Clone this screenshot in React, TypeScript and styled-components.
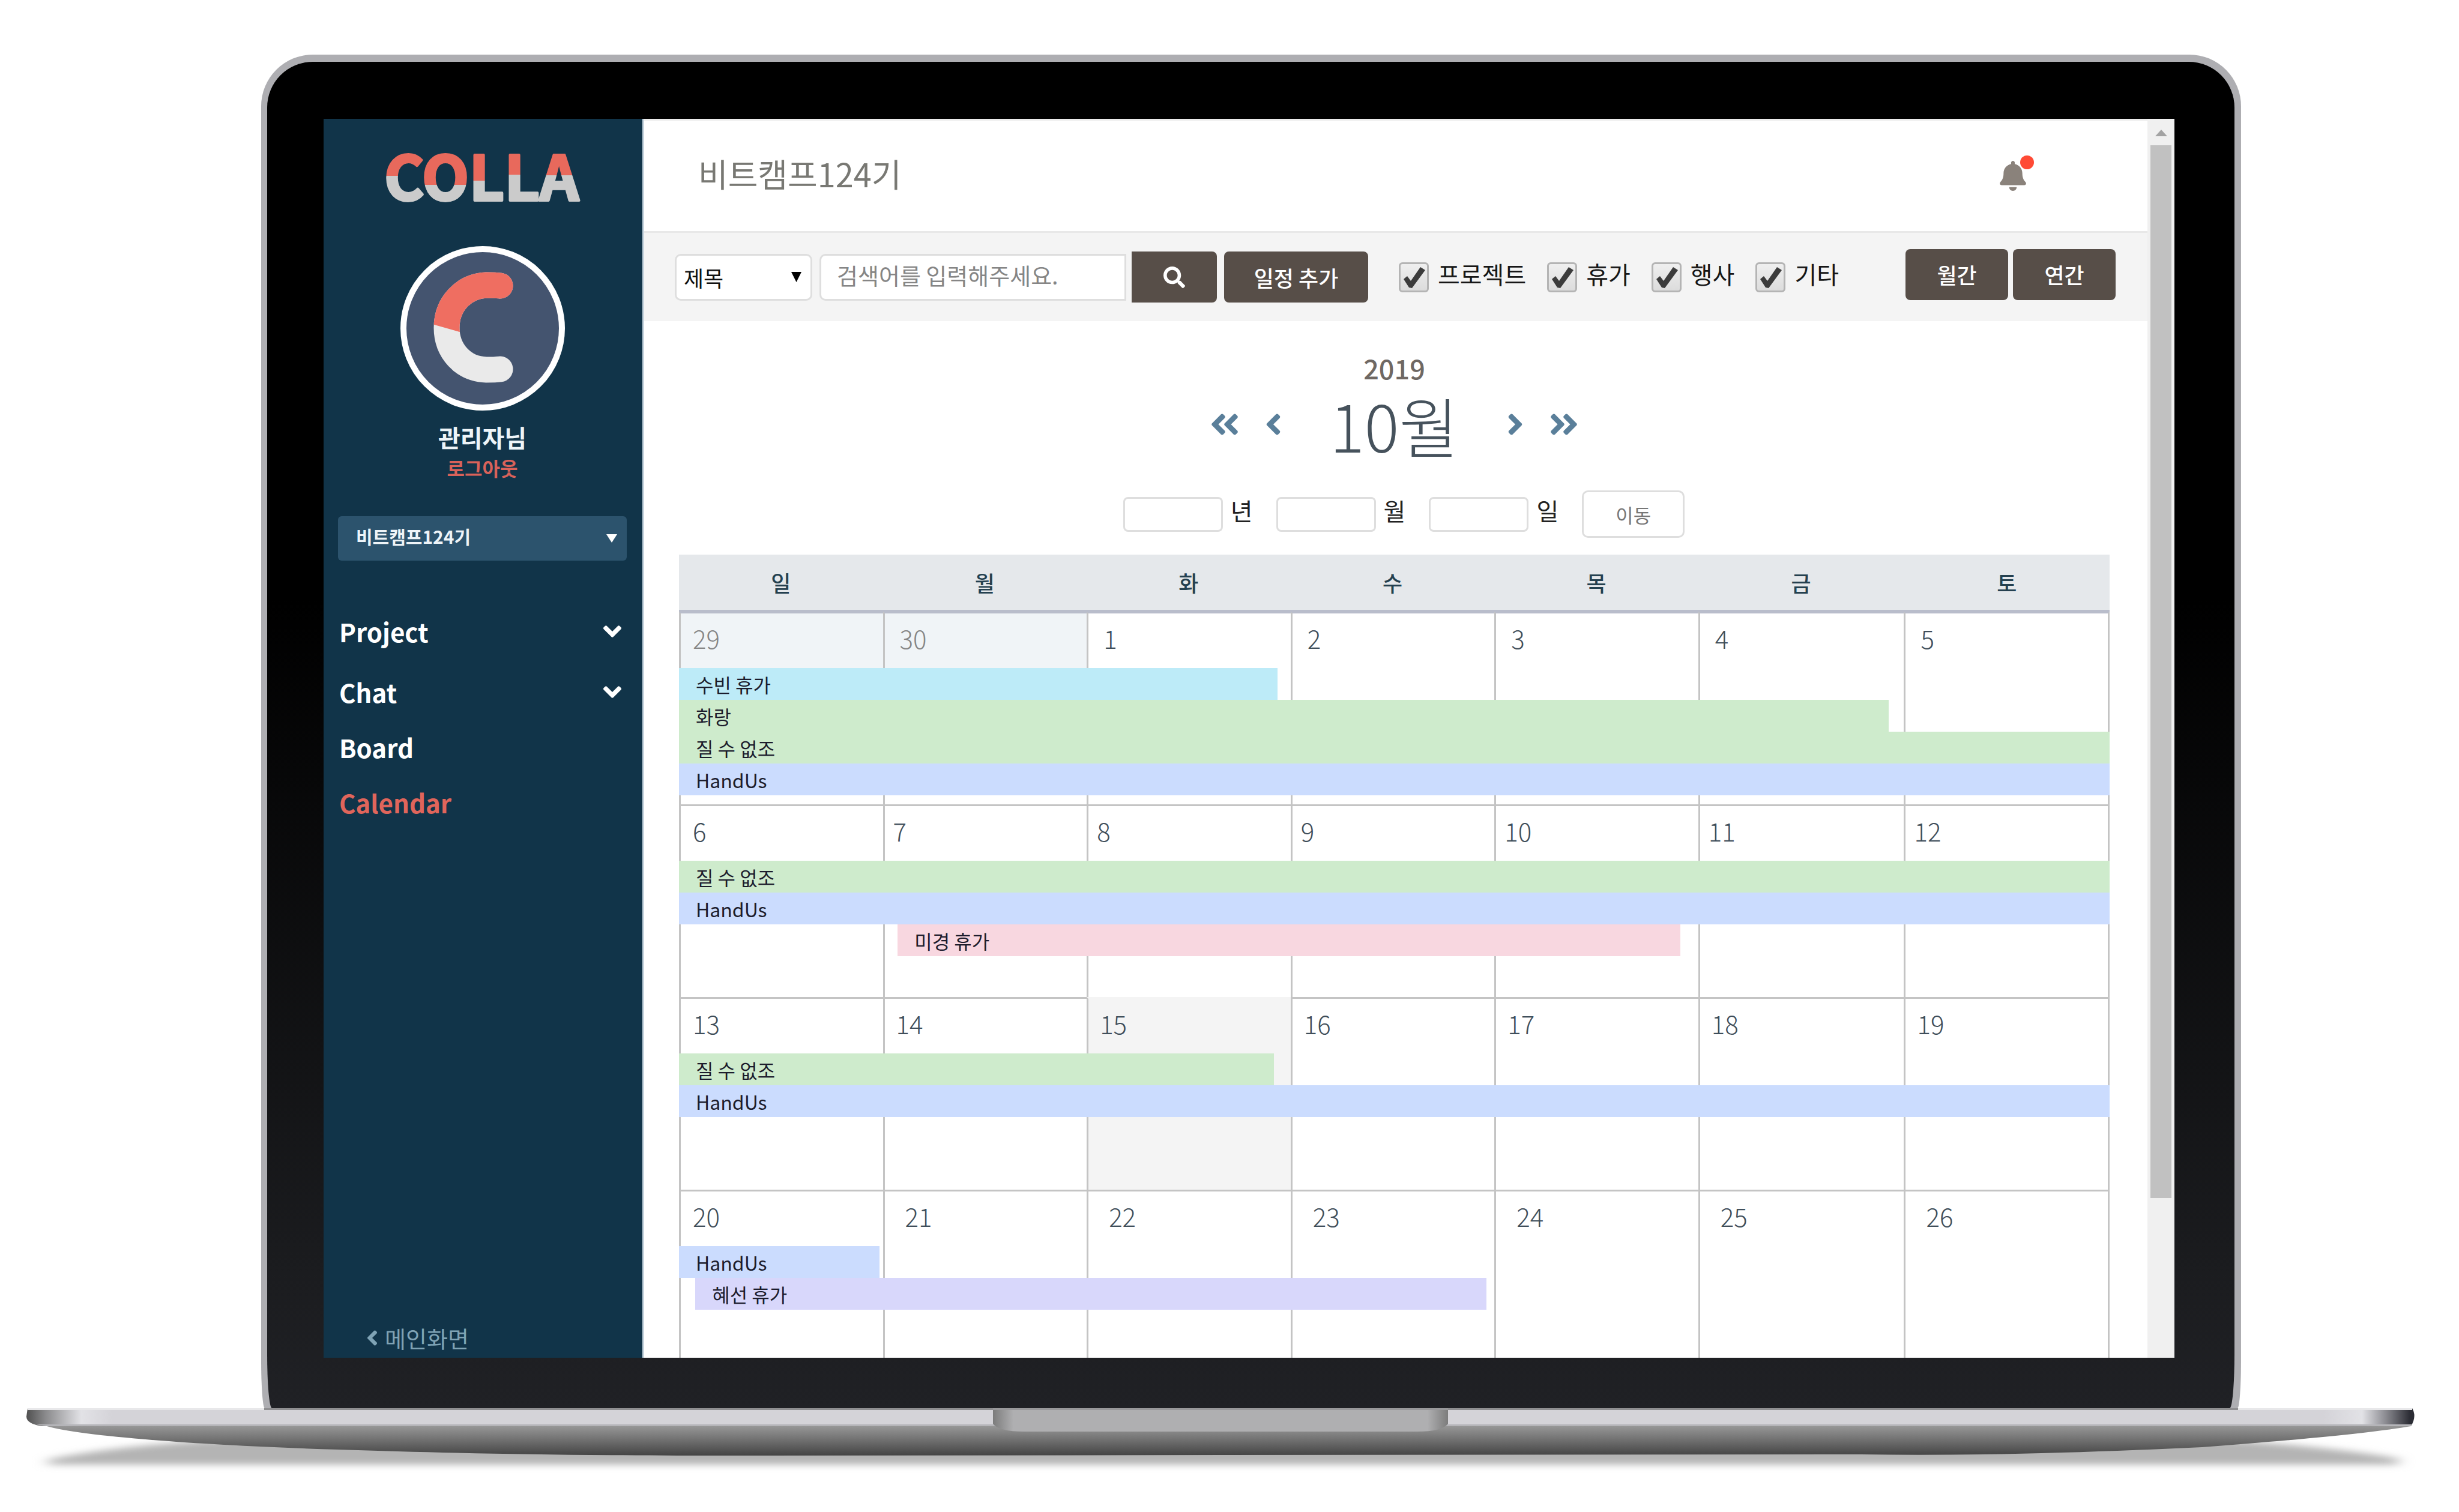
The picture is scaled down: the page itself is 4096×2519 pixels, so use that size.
import React from "react";
import styled, { createGlobalStyle } from "styled-components";
import {
  FaAngleDoubleLeft,
  FaAngleDoubleRight,
  FaAngleDown,
  FaAngleLeft,
  FaAngleRight,
  FaBell,
  FaSearch,
} from "react-icons/fa";

const Global = createGlobalStyle`
  *, *::before, *::after { box-sizing: border-box; }
  body { margin: 0; background: #fff; }
  body, button, input, select {
    font-family: "Noto Sans CJK KR", "Noto Sans", sans-serif;
  }
  button, input, select { margin: 0; padding: 0; border: 0; }
  button { cursor: pointer; }
`;

/* ---------- laptop ---------- */

const Stage = styled.div`
  display: flex;
  flex-direction: column;
  height: 100vh;
  padding-top: 91px;
  overflow: hidden;
`;

const Lid = styled.div`
  flex: 1;
  min-height: 0;
  display: flex;
  margin: 0 363px 0 435px;
  padding: 12px 11px 0 10px;
  border-radius: 86px 86px 0 0;
  border-bottom-left-radius: 6px 80px;
  border-bottom-right-radius: 6px 80px;
  background: #aeaeb2;
`;

const Bezel = styled.div`
  flex: 1;
  min-width: 0;
  display: flex;
  padding: 95px 100px 84px 94px;
  border-radius: 76px 76px 0 0;
  border-bottom-left-radius: 8px 90px;
  border-bottom-right-radius: 8px 90px;
  background: linear-gradient(#000 0%, #000 40%, #1b1c1f 90%, #202125 100%);
`;

const Screen = styled.div`
  flex: 1;
  min-width: 0;
  display: flex;
  overflow: hidden;
  background: #fff;
`;

const BaseDrawing = styled.svg`
  display: block;
  flex: none;
  width: 100%;
  height: 173px;
`;

/* ---------- sidebar ---------- */

const Sidebar = styled.aside`
  flex: none;
  display: flex;
  flex-direction: column;
  align-items: center;
  width: 534px;
  padding: 16px 26px 5px 24px;
  border-right: 3px solid #c8d6e0;
  background: #113449;
  color: #fff;
`;

const Logo = styled.svg`
  flex: none;
  width: 360px;
  height: 156px;
`;

const Avatar = styled.svg`
  flex: none;
  width: 274px;
  height: 274px;
  margin-top: 40px;
`;

const UserName = styled.strong`
  margin-top: 20px;
  font-size: 40px;
  font-weight: 700;
  line-height: 48px;
  color: #eef4f8;
`;

const Logout = styled.a`
  margin-top: 7px;
  font-size: 32px;
  font-weight: 700;
  line-height: 40px;
  color: #d9625a;
  text-decoration: none;
`;

const SelectWrap = styled.div<{ $arrowInset: number; $width: string }>`
  flex: none;
  display: grid;
  align-items: center;
  width: ${(p) => p.$width};
  & > * { grid-area: 1 / 1; }
  & > svg {
    justify-self: end;
    margin-right: ${(p) => p.$arrowInset}px;
    pointer-events: none;
  }
`;

const TeamSelect = styled.select`
  appearance: none;
  width: 100%;
  height: 74px;
  padding: 0 60px 8px 30px;
  border-radius: 6px;
  background: #2c536d;
  color: #eef4f8;
  font-size: 30px;
  font-weight: 700;
`;

const TeamPicker = styled.div`
  align-self: stretch;
  margin-top: 61px;
`;

const Nav = styled.nav`
  align-self: stretch;
  display: flex;
  flex-direction: column;
  gap: 36px;
  margin-top: 90px;
  padding: 0 0 0 2px;
`;

const NavLink = styled.a<{ $active?: boolean }>`
  display: flex;
  align-items: center;
  justify-content: space-between;
  font-size: 42px;
  font-weight: 700;
  line-height: 56px;
  color: ${(p) => (p.$active ? "#e0655b" : "#fff")};
  text-decoration: none;
  &:first-child { margin-bottom: 9px; }
  & > svg { width: 48px; height: 48px; }
`;

const BackLink = styled.a`
  align-self: flex-start;
  display: flex;
  align-items: center;
  gap: 1px;
  margin-top: auto;
  margin-left: 37px;
  font-size: 38px;
  line-height: 56px;
  color: #7fa3b5;
  text-decoration: none;
  & > svg { width: 40px; height: 40px; }
`;

/* ---------- main column ---------- */

const Main = styled.main`
  flex: 1;
  min-width: 0;
  overflow: hidden;
  border-top: 3px solid #ececec;
`;

const Header = styled.header`
  display: flex;
  align-items: center;
  justify-content: space-between;
  height: 187px;
  padding: 0 199px 0 90px;
  border-bottom: 3px solid #e8e8e8;
`;

const Title = styled.h1`
  margin: 0;
  padding-bottom: 8px;
  font-size: 54px;
  font-weight: 400;
  line-height: 72px;
  color: #787873;
`;

const BellButton = styled.button`
  position: relative;
  display: flex;
  background: none;
  color: #8a827b;
  & > svg { width: 50px; height: 50px; }
`;

const BellDot = styled.span`
  position: absolute;
  top: -9px;
  right: -10px;
  width: 23px;
  height: 23px;
  border-radius: 50%;
  background: #ff4a35;
`;

const Toolbar = styled.form`
  display: flex;
  align-items: center;
  gap: 12px;
  height: 147px;
  padding: 0 53px 0 51px;
  background: #f4f4f4;
`;

const fieldBorder = "3px solid #dedede";

const FieldSelect = styled.select`
  appearance: none;
  width: 100%;
  height: 78px;
  padding: 0 48px 0 12px;
  border: ${fieldBorder};
  border-radius: 10px;
  background: #fff;
  color: #111;
  font-size: 36px;
`;

const SearchGroup = styled.div`
  flex: 0 1 662px;
  min-width: 0;
  display: flex;
  align-items: center;
  gap: 9px;
`;

const SearchInput = styled.input`
  flex: 1;
  min-width: 0;
  height: 78px;
  padding: 0 26px 8px;
  border: ${fieldBorder};
  border-radius: 10px 0 0 10px;
  background: #fff;
  font-size: 38px;
  &::placeholder { color: #858585; opacity: 1; }
`;

const DarkButton = styled.button<{ $width: number; $attached?: boolean }>`
  flex: none;
  display: flex;
  align-items: center;
  justify-content: center;
  width: ${(p) => p.$width}px;
  height: 85px;
  border-radius: ${(p) => (p.$attached ? "0 8px 8px 0" : "8px")};
  background: #574e48;
  color: #fff;
  font-size: 36px;
  font-weight: 500;
`;

const Filters = styled.div`
  display: flex;
  gap: 35px;
  margin-left: 39px;
`;

const FilterLabel = styled.label`
  display: flex;
  align-items: center;
  gap: 15px;
  font-size: 40px;
  line-height: 56px;
  color: #161616;
`;

const FilterText = styled.span`
  padding-bottom: 11px;
`;

const TickBox = styled.span`
  display: grid;
  & > * { grid-area: 1 / 1; }
  & > svg { pointer-events: none; visibility: hidden; }
  & > input:checked + svg { visibility: visible; }
`;

const Tick = styled.input`
  appearance: none;
  width: 50px;
  height: 50px;
  border: 3px solid #b4b4b4;
  border-radius: 6px;
  background: linear-gradient(#efefef, #dcdcdc);
`;

const ViewGroup = styled.div`
  display: flex;
  gap: 8px;
  margin-left: auto;
  padding-bottom: 9px;
`;

/* ---------- calendar ---------- */

const Calendar = styled.section`
  display: flex;
  flex-direction: column;
  padding: 50px 63px 0 58px;
`;

const Year = styled.div`
  text-align: center;
  font-size: 45px;
  font-weight: 500;
  line-height: 56px;
  color: #6f6863;
`;

const MonthRow = styled.div`
  display: flex;
  align-items: center;
  justify-content: center;
  gap: 25px;
  margin-top: 16px;
`;

const MonthName = styled.h2`
  margin: 0 41px;
  font-size: 108px;
  font-weight: 300;
  line-height: 100px;
  color: #46525c;
`;

const StepButton = styled.button`
  display: flex;
  background: none;
  color: #5a7f9a;
  & > svg { width: 56px; height: 56px; }
`;

const JumpRow = styled.form`
  display: flex;
  align-items: center;
  justify-content: center;
  gap: 39px;
  margin-top: 60px;
  padding-left: 32px;
`;

const JumpField = styled.label`
  display: flex;
  align-items: center;
  gap: 13px;
  font-size: 40px;
  line-height: 48px;
  color: #222;
  & > span { padding-bottom: 14px; }
`;

const JumpInput = styled.input`
  width: 166px;
  height: 58px;
  padding: 0 12px;
  border: ${fieldBorder};
  border-radius: 8px;
  font-size: 32px;
`;

const JumpButton = styled.button`
  width: 171px;
  height: 79px;
  border: ${fieldBorder};
  border-radius: 10px;
  background: #fff;
  color: #777;
  font-size: 32px;
`;

const Grid = styled.table`
  width: 100%;
  margin-top: 28px;
  table-layout: fixed;
  border-collapse: separate;
  border-spacing: 0;
`;

const WeekdayCol = styled.col`
  width: 14.25%;
`;

const DayHead = styled.th`
  height: 95px;
  padding: 0;
  border-bottom: 3px solid #b9bdcb;
  background: #e5e8eb;
  font-size: 36px;
  font-weight: 500;
  line-height: 48px;
  color: #24404f;
`;

const lines = "#c4c4c4";

const Day = styled.td<{ $tone?: "muted" | "today"; $first: boolean; $indent: number }>`
  position: relative;
  height: 321px;
  padding: 17px 0 0 ${(p) => p.$indent}px;
  vertical-align: top;
  border-top: 3px solid ${(p) => (p.$first ? "#b9bdcb" : p.$tone === "today" ? "#f4f4f4" : lines)};
  border-left: 3px solid ${lines};
  background: ${(p) => (p.$tone === "muted" ? "#f0f4f7" : p.$tone === "today" ? "#f4f4f4" : "#fff")};
  background-clip: padding-box;
  font-size: 42px;
  line-height: 48px;
  font-weight: 300;
  color: ${(p) => (p.$tone === "muted" ? "#858585" : "#3f4e5a")};
  &:last-child { border-right: 3px solid ${lines}; }
`;

const EventLayer = styled.div`
  position: absolute;
  z-index: 1;
  top: 91px;
  left: -3px;
  width: calc(700% + 27px);
`;

const EventBar = styled.div`
  height: 53px;
  padding-left: 28px;
  font-size: 32px;
  font-weight: 400;
  line-height: 54px;
  color: #1c1c2c;
  white-space: nowrap;
`;

/* Days outside the month are tinted only above the strip under the bars. */
const MutedFill = styled.span`
  position: absolute;
  left: 0;
  right: 0;
  bottom: 0;
  height: 16px;
  background: #fff;
`;

/* ---------- scrollbar ---------- */

const ScrollTrack = styled.div`
  flex: none;
  display: flex;
  flex-direction: column;
  align-items: center;
  width: 45px;
  background: #f0f0f0;
  & > svg { flex: none; margin: 18px 0 15px; }
`;

const ScrollThumb = styled.div`
  width: 35px;
  height: 85%;
  background: #c1c1c1;
`;

/* ---------- data ---------- */

type Ev = { name: string; color: string; start: number; end: number };
type Week = { days: number[]; indent: number; events: Ev[] };

const SKY = "#bdebf8";
const GREEN = "#ceebcc";
const BLUE = "#cbdcfe";
const PINK = "#f8d7e0";
const VIOLET = "#d8d7fb";

const weeks: Week[] = [
  {
    days: [29, 30, 1, 2, 3, 4, 5],
    indent: 25,
    events: [
      { name: "수빈 휴가", color: SKY, start: 0, end: 2.93 },
      { name: "화랑", color: GREEN, start: 0, end: 5.92 },
      { name: "질 수 없조", color: GREEN, start: 0, end: 7 },
      { name: "HandUs", color: BLUE, start: 0, end: 7 },
    ],
  },
  {
    days: [6, 7, 8, 9, 10, 11, 12],
    indent: 14,
    events: [
      { name: "질 수 없조", color: GREEN, start: 0, end: 7 },
      { name: "HandUs", color: BLUE, start: 0, end: 7 },
      { name: "미경 휴가", color: PINK, start: 1.07, end: 4.9 },
    ],
  },
  {
    days: [13, 14, 15, 16, 17, 18, 19],
    indent: 19,
    events: [
      { name: "질 수 없조", color: GREEN, start: 0, end: 2.91 },
      { name: "HandUs", color: BLUE, start: 0, end: 7 },
    ],
  },
  {
    days: [20, 21, 22, 23, 24, 25, 26],
    indent: 34,
    events: [
      { name: "HandUs", color: BLUE, start: 0, end: 0.98 },
      { name: "혜선 휴가", color: VIOLET, start: 0.08, end: 3.95 },
    ],
  },
];

const TODAY = 15;
const weekdays = ["일", "월", "화", "수", "목", "금", "토"];
const filters = ["프로젝트", "휴가", "행사", "기타"];
const jumps = ["년", "월", "일"];

function toneOf(week: number, day: number): "muted" | "today" | undefined {
  if (week === 0 && day > 7) return "muted";
  return day === TODAY ? "today" : undefined;
}

function DownTriangle({ w, h, fill }: { w: number; h: number; fill: string }) {
  return (
    <svg width={w} height={h} viewBox="0 0 10 8" preserveAspectRatio="none" aria-hidden="true">
      <path d="M0 0H10L5 8Z" fill={fill} />
    </svg>
  );
}

function Brand() {
  const cuts = [47, 66, 57, 45, 46];
  return (
    <Logo viewBox="0 0 360 156" role="img" aria-label="COLLA">
      <defs>
        {cuts.map((c, i) => (
          <linearGradient key={i} id={`cut${i}`} gradientUnits="userSpaceOnUse" x1="0" y1="40" x2="0" y2="122">
            <stop offset={`${c}%`} stopColor="#e8695c" />
            <stop offset={`${c}%`} stopColor="#cbcbcb" />
          </linearGradient>
        ))}
      </defs>
      <text x="178" y="120" textAnchor="middle" fontSize="102" fontWeight="700" strokeWidth="4" strokeLinejoin="round">
        {"COLLA".split("").map((ch, i) => (
          <tspan key={i} fill={`url(#cut${i})`} stroke={`url(#cut${i})`}>
            {ch}
          </tspan>
        ))}
      </text>
    </Logo>
  );
}

function Emblem() {
  const arc = "M166 66C158 65 150 65 143 65C104 67 77 98 77 136C77 174 104 205 143 206C150 206 158 206 166 205";
  return (
    <Avatar viewBox="0 0 274 274" aria-hidden="true">
      <defs>
        <clipPath id="upper">
          <path d="M0 0H274V193L0 115Z" />
        </clipPath>
      </defs>
      <circle cx="137" cy="137" r="132" fill="#44546f" stroke="#fff" strokeWidth="10" />
      <path d={arc} fill="none" stroke="#eaeaea" strokeWidth="43" strokeLinecap="round" />
      <path d={arc} fill="none" stroke="#ef6e61" strokeWidth="43" strokeLinecap="round" clipPath="url(#upper)" />
    </Avatar>
  );
}

function LaptopBase() {
  return (
    <BaseDrawing viewBox="0 0 4096 173" preserveAspectRatio="none" aria-hidden="true">
      <defs>
        <linearGradient id="under" gradientUnits="userSpaceOnUse" x1="0" y1="30" x2="0" y2="80">
          <stop offset="0" stopColor="#969696" />
          <stop offset="0.4" stopColor="#757575" />
          <stop offset="1" stopColor="#424242" />
        </linearGradient>
        <linearGradient id="band" gradientUnits="userSpaceOnUse" x1="44" y1="0" x2="4022" y2="0">
          <stop offset="0" stopColor="#505050" />
          <stop offset="0.008" stopColor="#8a8a8c" />
          <stop offset="0.023" stopColor="#e2e2e6" />
          <stop offset="0.036" stopColor="#d4d3d8" />
          <stop offset="0.962" stopColor="#d4d3d8" />
          <stop offset="0.978" stopColor="#e2e2e6" />
          <stop offset="0.988" stopColor="#8a8a90" />
          <stop offset="0.998" stopColor="#2c2d35" />
        </linearGradient>
        <linearGradient id="notch" x1="0" y1="0" x2="1" y2="0">
          <stop offset="0" stopColor="#7c7c7c" />
          <stop offset="0.045" stopColor="#afafb1" />
          <stop offset="0.955" stopColor="#afafb1" />
          <stop offset="1" stopColor="#7c7c7c" />
        </linearGradient>
        <filter id="soft" x="-5%" y="-50%" width="110%" height="200%">
          <feGaussianBlur stdDeviation="12 6" />
        </filter>
      </defs>
      <path d="M80 86Q220 56 480 48H3620Q3860 60 3995 84V94H80Z" fill="#b4b4b4" filter="url(#soft)" />
      <path
        d="M60 28L78 30C130 46 330 62 564 69C750 75 940 79 1200 79L3100 77C3300 80 3494 73 3668 65C3843 52 3958 40 4016 30Z"
        fill="url(#under)"
      />
      <path d="M46 0H4018Q4026 14 4016 30H70Q44 26 44 14Z" fill="url(#band)" />
      <path d="M60 27H4018L4016 30H78Z" fill="#b5b5b9" />
      <path d="M46 0H4018V3H46Z" fill="#e8e8ea" />
      <path d="M440 0H3728V3H440Z" fill="#8f8f91" />
      <path d="M1654 0H2412V26Q2402 39 2360 39H1706Q1664 39 1654 26Z" fill="url(#notch)" />
      <path d="M1654 0H2412V3H1654Z" fill="#98989a" />
    </BaseDrawing>
  );
}

export default function App() {
  return (
    <>
      <Global />
      <Stage>
        <Lid>
          <Bezel>
            <Screen>
              <Sidebar>
                <Brand />
                <Emblem />
                <UserName>관리자님</UserName>
                <Logout href="#logout">로그아웃</Logout>
                <TeamPicker>
                  <SelectWrap $arrowInset={16} $width="100%">
                    <TeamSelect aria-label="팀 선택">
                      <option>비트캠프124기</option>
                    </TeamSelect>
                    <DownTriangle w={18} h={14} fill="#fff" />
                  </SelectWrap>
                </TeamPicker>
                <Nav>
                  <NavLink href="#project">
                    Project <FaAngleDown />
                  </NavLink>
                  <NavLink href="#chat">
                    Chat <FaAngleDown />
                  </NavLink>
                  <NavLink href="#board">Board</NavLink>
                  <NavLink href="#calendar" $active>
                    Calendar
                  </NavLink>
                </Nav>
                <BackLink href="#main">
                  <FaAngleLeft />
                  메인화면
                </BackLink>
              </Sidebar>

              <Main>
                <Header>
                  <Title>비트캠프124기</Title>
                  <BellButton aria-label="알림">
                    <FaBell />
                    <BellDot />
                  </BellButton>
                </Header>

                <Toolbar onSubmit={(e) => e.preventDefault()}>
                  <SelectWrap $arrowInset={18} $width="229px">
                    <FieldSelect aria-label="검색 조건">
                      <option>제목</option>
                    </FieldSelect>
                    <DownTriangle w={17} h={17} fill="#000" />
                  </SelectWrap>
                  <SearchGroup>
                    <SearchInput aria-label="검색어" placeholder="검색어를 입력해주세요." />
                    <DarkButton $width={142} $attached aria-label="검색">
                      <FaSearch />
                    </DarkButton>
                  </SearchGroup>
                  <DarkButton $width={240} type="button">
                    일정 추가
                  </DarkButton>
                  <Filters>
                    {filters.map((f) => (
                      <FilterLabel key={f}>
                        <TickBox>
                          <Tick type="checkbox" defaultChecked />
                          <svg width="50" height="50" viewBox="0 0 50 50" aria-hidden="true">
                            <path d="M8 28L14 23L20 31L36 8L44 13L22 43L17 42Z" fill="#3c3c3c" />
                          </svg>
                        </TickBox>
                        <FilterText>{f}</FilterText>
                      </FilterLabel>
                    ))}
                  </Filters>
                  <ViewGroup>
                    <DarkButton $width={171} type="button">
                      월간
                    </DarkButton>
                    <DarkButton $width={171} type="button">
                      연간
                    </DarkButton>
                  </ViewGroup>
                </Toolbar>

                <Calendar>
                  <Year>2019</Year>
                  <MonthRow>
                    <StepButton aria-label="이전 해">
                      <FaAngleDoubleLeft />
                    </StepButton>
                    <StepButton aria-label="이전 달">
                      <FaAngleLeft />
                    </StepButton>
                    <MonthName>10월</MonthName>
                    <StepButton aria-label="다음 달">
                      <FaAngleRight />
                    </StepButton>
                    <StepButton aria-label="다음 해">
                      <FaAngleDoubleRight />
                    </StepButton>
                  </MonthRow>
                  <JumpRow onSubmit={(e) => e.preventDefault()}>
                    {jumps.map((j) => (
                      <JumpField key={j}>
                        <JumpInput type="text" />
                        <span>{j}</span>
                      </JumpField>
                    ))}
                    <JumpButton>이동</JumpButton>
                  </JumpRow>

                  <Grid>
                    <colgroup>
                      {weekdays.slice(0, 5).map((d) => (
                        <WeekdayCol key={d} />
                      ))}
                      <col span={2} />
                    </colgroup>
                    <thead>
                      <tr>
                        {weekdays.map((d) => (
                          <DayHead key={d} scope="col">
                            {d}
                          </DayHead>
                        ))}
                      </tr>
                    </thead>
                    <tbody>
                      {weeks.map((week, w) => (
                        <tr key={w}>
                          {week.days.map((day, i) => {
                            const tone = toneOf(w, day);
                            return (
                              <Day key={day} $tone={tone} $first={w === 0} $indent={i === 0 ? 20 : week.indent}>
                                {day}
                                {tone === "muted" && <MutedFill />}
                                {i === 0 && (
                                  <EventLayer>
                                    {week.events.map((ev) => (
                                      <EventBar
                                        key={ev.name}
                                        style={{
                                          background: ev.color,
                                          marginLeft: `${(ev.start / 7) * 100}%`,
                                          width: `${((ev.end - ev.start) / 7) * 100}%`,
                                        }}
                                      >
                                        {ev.name}
                                      </EventBar>
                                    ))}
                                  </EventLayer>
                                )}
                              </Day>
                            );
                          })}
                        </tr>
                      ))}
                    </tbody>
                  </Grid>
                </Calendar>
              </Main>

              <ScrollTrack aria-hidden="true">
                <svg width="20" height="11" viewBox="0 0 20 11">
                  <path d="M10 0L20 11H0Z" fill="#a3a3a3" />
                </svg>
                <ScrollThumb />
              </ScrollTrack>
            </Screen>
          </Bezel>
        </Lid>
        <LaptopBase />
      </Stage>
    </>
  );
}
